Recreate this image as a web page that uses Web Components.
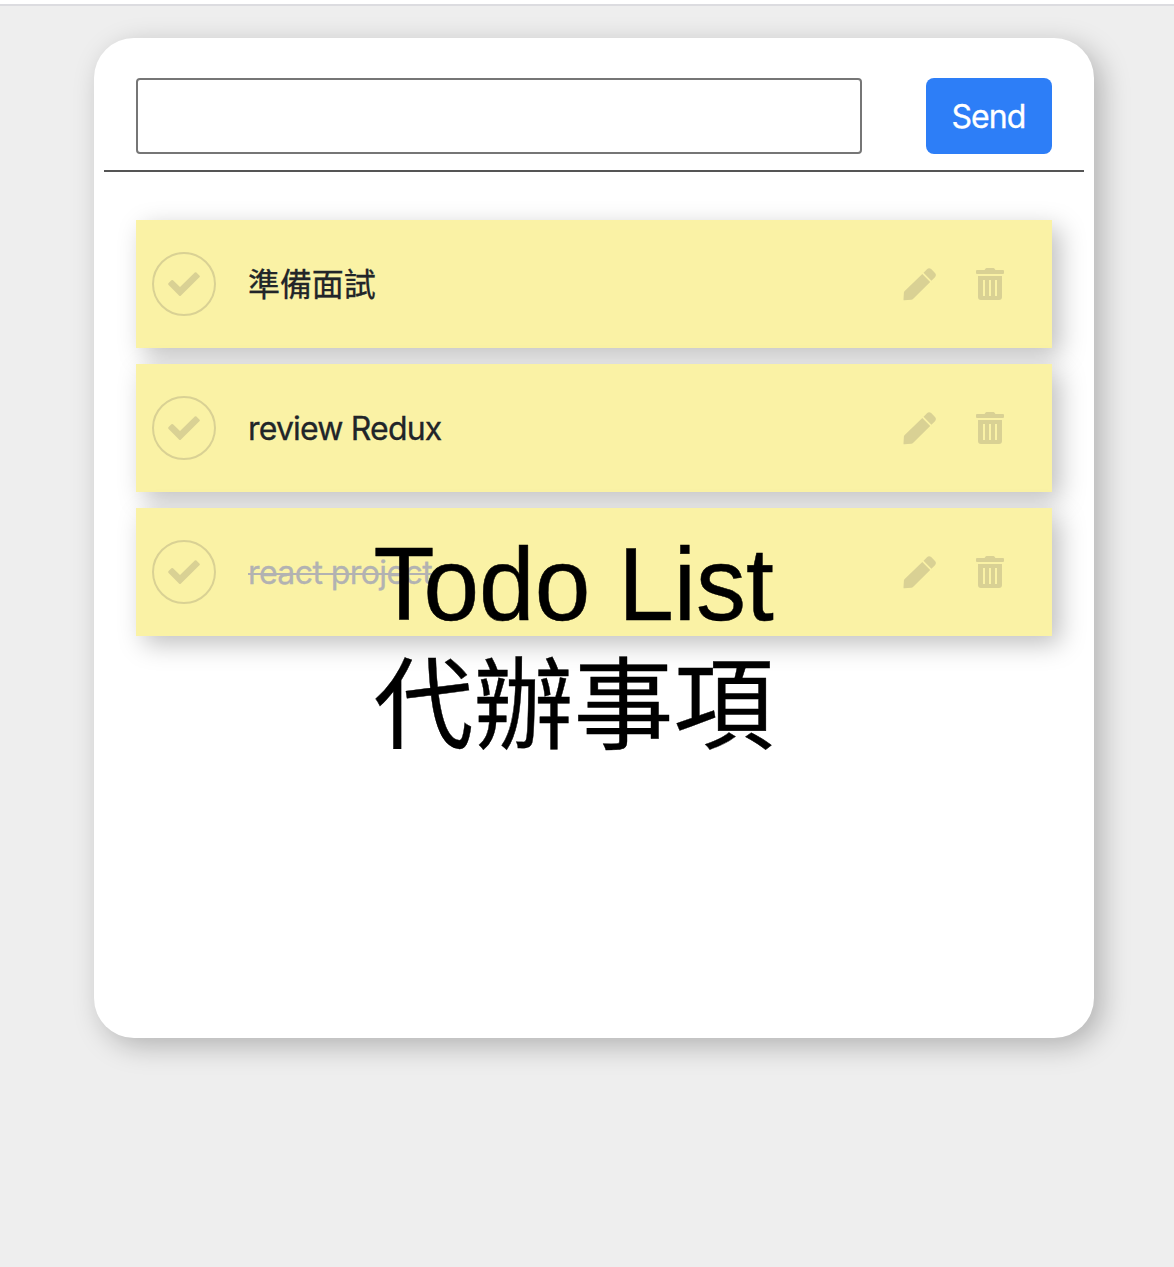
<!DOCTYPE html>
<html lang="zh-Hant">
<head>
<meta charset="utf-8">
<title>Todo List</title>
<style>
html,body{margin:0;height:100%}
body{background:#eee;overflow:hidden;font-family:Inter,"Noto Sans CJK TC",sans-serif;font-size:32px;color:#212529}
todo-item:nth-of-type(1){letter-spacing:-.1px}
todo-item:nth-of-type(2){letter-spacing:-.82px}
todo-item:nth-of-type(3){letter-spacing:-.58px}
</style>
</head>
<body>
<todo-app>
  <todo-item>準備面試</todo-item>
  <todo-item>review Redux</todo-item>
  <todo-item done>react project</todo-item>
</todo-app>
<script>
const define = (name, html) => customElements.define(name, class extends HTMLElement {
  constructor() {
    super();
    this.attachShadow({ mode: 'open' }).innerHTML = html;
  }
});

define('todo-icon-check', `
<style>:host{display:block;width:32px;height:24px}svg{display:block}</style>
<svg width="32" height="24" viewBox="0 0 32 24"><path fill="#d9d194" d="M.6 11.1 3.4 8.3Q4.2 7.5 5 8.3L12 15 26.8.5Q27.6-.2 28.4.5L31.4 3.5Q32.3 4.4 31.4 5.3L13 23.5Q12 24.5 11 23.5L.6 13Q-.3 12 .6 11.1Z"/></svg>`);

define('todo-icon-pencil', `
<style>:host{display:block;width:34px;height:33px}svg{display:block}</style>
<svg width="34" height="33" viewBox="0 0 34 33"><g fill="#d9d194"><path d="M19.3 6 27.2 13.9 10 31Q9.3 31.7 8.3 31.8L1.2 32.3Q.4 32.3.5 31.4L.9 24.5Q1 23.6 1.7 22.9Z"/><path d="M20.5 4.7 24 1.2Q26 -.8 28.2 1.1L32 5Q33.8 7 32 9.2L28.4 12.7Z"/></g></svg>`);

define('todo-icon-trash', `
<style>:host{display:block;width:28px;height:32px}svg{display:block}</style>
<svg width="28" height="32" viewBox="0 0 28 32"><path fill="#d9d194" fill-rule="evenodd" d="M1 2H8.6L9.4.7Q9.8 0 10.6 0H17.4Q18.2 0 18.6.7L19.4 2H27Q28 2 28 3V5Q28 6 27 6H1Q0 6 0 5V3Q0 2 1 2ZM2 8H26V29Q26 32 23 32H5Q2 32 2 29ZM7 12V28H9V12ZM13 12V28H15V12ZM19 12V28H21V12Z"/></svg>`);

define('todo-item', `
<style>
:host{display:flex;box-sizing:border-box;height:128px;align-items:center;padding:0 48px 0 16px;background:#faf2a5;box-shadow:8px 8px 24px rgba(0,0,0,.25)}
.ring{box-sizing:border-box;width:64px;height:64px;border:2px solid #d9d194;border-radius:50%;display:flex;align-items:center;justify-content:center}
.text{flex:1;margin-left:32px;line-height:48px;padding-top:1px;-webkit-text-stroke:.3px currentColor}
:host([done]) .text{color:#b2b2b2}
:host([done]) .text span{text-decoration:line-through;text-decoration-thickness:2px}
todo-icon-pencil{margin-right:39px}
</style>
<div class="ring"><todo-icon-check></todo-icon-check></div>
<div class="text"><span><slot></slot></span></div>
<todo-icon-pencil></todo-icon-pencil>
<todo-icon-trash></todo-icon-trash>`);

define('todo-form', `
<style>
:host{display:flex;box-sizing:border-box;margin:0 10px;height:134px;padding:40px 32px 16px;justify-content:space-between;border-bottom:2px solid #555}
input{box-sizing:border-box;width:726px;height:76px;border:2px solid #767676;border-radius:4px;background:#fff;padding:0 16px;font:inherit}
button{width:126px;height:76px;border:0;border-radius:8px;background:#2d7ef7;color:#fff;font:inherit;letter-spacing:-.9px;padding:0 1px 0 0;-webkit-text-stroke:.3px currentColor}
</style>
<input type="text" aria-label="Todo"><button type="button">Send</button>`);

define('todo-title', `
<style>
:host{display:block;width:400px;font:100px/110px "Liberation Sans","Noto Sans CJK TC",sans-serif;color:#000;white-space:nowrap}
div{height:110px}
.en{transform:scaleY(1.03);transform-origin:0 90px;-webkit-text-stroke:.5px currentColor}
.zh{padding-top:11px;-webkit-text-stroke:.4px currentColor}
</style>
<div class="en">Todo List</div><div class="zh">代辦事項</div>`);

define('todo-app', `
<style>
:host{display:flow-root;height:100%}
.bar{height:4px;background:#fff;border-bottom:2px solid #dcdce0}
.panel{position:relative;width:1000px;height:1000px;margin:32px 0 0 94px;background:#fff;border-radius:40px;box-shadow:8px 8px 28px rgba(0,0,0,.25)}
.list{display:flex;flex-direction:column;gap:16px;padding:48px 42px 0}
todo-title{position:absolute;left:279.5px;top:492px}
</style>
<div class="bar"></div>
<div class="panel">
  <todo-form></todo-form>
  <div class="list"><slot></slot></div>
  <todo-title></todo-title>
</div>`);
</script>
</body>
</html>
